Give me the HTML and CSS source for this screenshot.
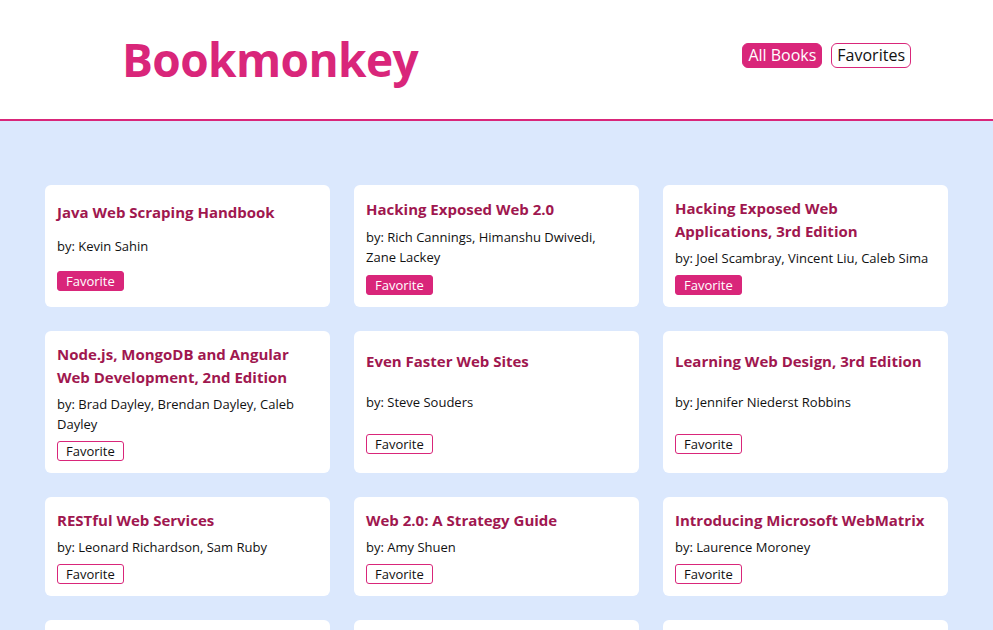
FILE: index.html
```html
<!DOCTYPE html>
<html>
<head>
<meta charset="utf-8">
<link rel="stylesheet" href="styles.css">
</head>
<body>
<header class="top">
  <h1 class="brand">Bookmonkey</h1>
  <nav class="nav">
    <a class="nav-btn active">All Books</a>
    <a class="nav-btn">Favorites</a>
  </nav>
</header>
<main class="grid">
  <div class="card"><div class="title">Java Web Scraping Handbook</div><div class="by">by: Kevin Sahin</div><div><span class="fav on">Favorite</span></div></div>
  <div class="card"><div class="title">Hacking Exposed Web 2.0</div><div class="by">by: Rich Cannings, Himanshu Dwivedi, Zane Lackey</div><div><span class="fav on">Favorite</span></div></div>
  <div class="card"><div class="title">Hacking Exposed Web Applications, 3rd Edition</div><div class="by">by: Joel Scambray, Vincent Liu, Caleb Sima</div><div><span class="fav on">Favorite</span></div></div>
  <div class="card"><div class="title">Node.js, MongoDB and Angular Web Development, 2nd Edition</div><div class="by">by: Brad Dayley, Brendan Dayley, Caleb Dayley</div><div><span class="fav">Favorite</span></div></div>
  <div class="card"><div class="title">Even Faster Web Sites</div><div class="by">by: Steve Souders</div><div><span class="fav">Favorite</span></div></div>
  <div class="card"><div class="title">Learning Web Design, 3rd Edition</div><div class="by">by: Jennifer Niederst Robbins</div><div><span class="fav">Favorite</span></div></div>
  <div class="card"><div class="title">RESTful Web Services</div><div class="by">by: Leonard Richardson, Sam Ruby</div><div><span class="fav">Favorite</span></div></div>
  <div class="card"><div class="title">Web 2.0: A Strategy Guide</div><div class="by">by: Amy Shuen</div><div><span class="fav">Favorite</span></div></div>
  <div class="card"><div class="title">Introducing Microsoft WebMatrix</div><div class="by">by: Laurence Moroney</div><div><span class="fav">Favorite</span></div></div>
  <div class="card placeholder"></div>
  <div class="card placeholder"></div>
  <div class="card placeholder"></div>
</main>
</body>
</html>
```

FILE: styles.css
```css
* { box-sizing: border-box; }
html, body { margin: 0; padding: 0; }
body {
  background: #dbe8fd;
  font-family: "Open Sans", "Noto Sans", sans-serif;
  color: #111;
}
.top {
  background: #fff;
  height: 121px;
  border-bottom: 2px solid #d9267a;
  display: flex;
  align-items: center;
  justify-content: space-between;
  padding: 0 82px 0 122px;
}
.brand {
  margin: 0;
  font-size: 46px;
  font-weight: 700;
  color: #d9267a;
  letter-spacing: -0.6px;
  line-height: 1;
  padding-bottom: 2px;
}
.nav {
  display: flex;
  gap: 9px;
  margin-bottom: 9px;
}
.nav-btn {
  display: block;
  font-size: 16px;
  line-height: 23px;
  padding: 0 5px;
  border: 1px solid #d9267a;
  border-radius: 6px;
  color: #111;
}
.nav-btn.active {
  background: #d9267a;
  color: #fff;
}
.grid {
  display: grid;
  grid-template-columns: repeat(3, 285px);
  gap: 24px;
  padding: 64px 45px 0;
}
.card {
  background: #fff;
  border-radius: 6px;
  padding: 12px;
  display: flex;
  flex-direction: column;
  justify-content: space-around;
  gap: 5px;
}
.card.placeholder {
  height: 98px;
}
.title {
  font-size: 15px;
  font-weight: 700;
  line-height: 23px;
  color: #a0174f;
}
.by {
  font-size: 13px;
  line-height: 20px;
}
.fav {
  display: inline-block;
  font-size: 13px;
  line-height: 18px;
  padding: 0 8px;
  border: 1px solid #d9267a;
  border-radius: 3px;
  color: #111;
}
.fav.on {
  background: #d9267a;
  color: #fff;
}
```
